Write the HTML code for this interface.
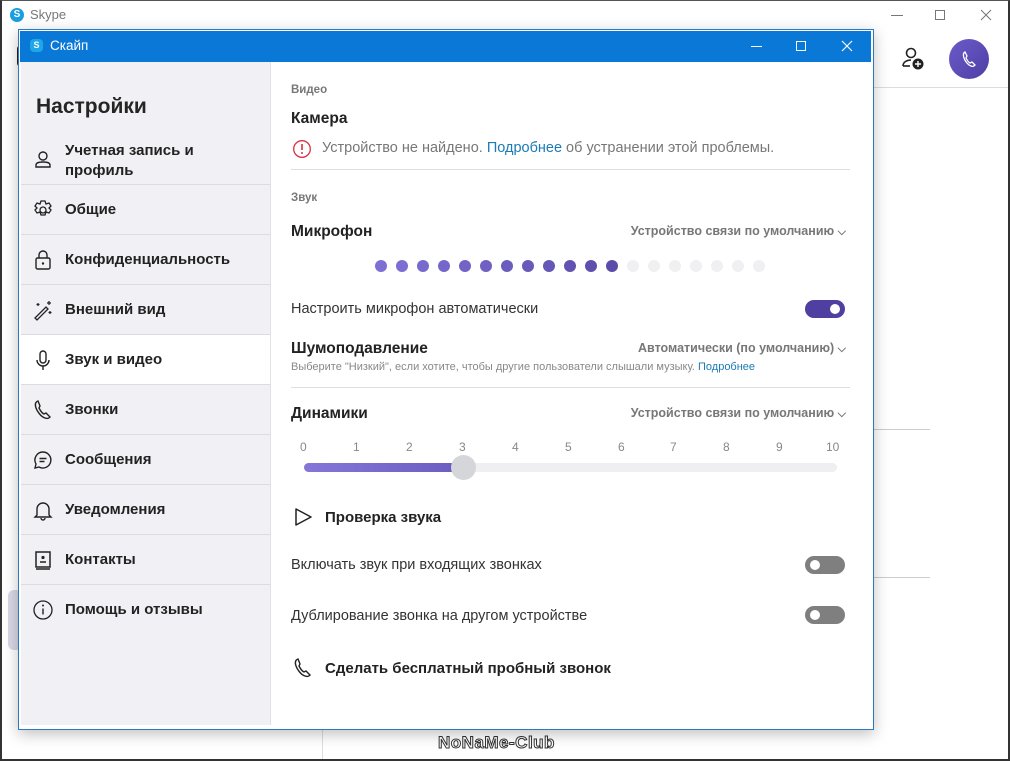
<!DOCTYPE html>
<html><head><meta charset="utf-8"><style>
*{margin:0;padding:0;box-sizing:border-box}
body{width:1010px;height:761px;overflow:hidden;background:#fff;font-family:"Liberation Sans","Noto Sans CJK SC",sans-serif;color:#222;position:relative}
.a{position:absolute}
.outer{left:0;top:0;width:1010px;height:761px;border:2px solid #333;border-top:1px solid #555;background:#fff}
.side{left:21px;top:62px;width:250px;height:663px;background:#f1f1f5;border-right:1px solid #e2e2e6}
.item{position:absolute;left:0;width:249px;height:50px;border-top:1px solid #dcdce0;font-weight:bold;font-size:15px;color:#222}
.item span{position:absolute;left:44px;top:16px}
.item svg{position:absolute;left:11px;top:14px}
.sep{position:absolute;left:291px;width:559px;height:1px;background:#dedede}
.t{font-size:14.5px;color:#333;white-space:nowrap}
.h{font-weight:bold;font-size:15.5px;color:#222;white-space:nowrap}
.dd{font-weight:bold;font-size:12.5px;color:#777;white-space:nowrap}
.dd b{font-size:11px}
.tg{width:40px;height:18px;border-radius:9px}
.tg i{position:absolute;top:4px;width:10px;height:10px;border-radius:5px;background:#fff}
</style></head><body>
<div class="a outer"></div>
<div class="a" style="left:10px;top:8px;width:14px;height:14px;border-radius:7px;background:#1a9ee0;color:#fff;font-size:10px;font-weight:bold;text-align:center;line-height:14px">S</div>
<div class="a" style="left:30px;top:7px;font-size:13px;color:#777">Skype</div>
<div class="a" style="left:891px;top:15px;width:12px;height:1px;background:#777"></div>
<div class="a" style="left:935px;top:10px;width:10px;height:10px;border:1px solid #777"></div>
<svg class="a" style="left:980px;top:9px" width="12" height="12"><path d="M1 1L11 11M11 1L1 11" stroke="#777" stroke-width="1"/></svg>
<svg class="a" style="left:900px;top:46px" width="26" height="26" viewBox="0 0 26 26"><circle cx="11" cy="7" r="4.5" fill="none" stroke="#222" stroke-width="1.6"/><path d="M3 20c0-4 4-6 8-6" fill="none" stroke="#222" stroke-width="1.6"/><path d="M3 20h7" stroke="#222" stroke-width="1.6"/><circle cx="18" cy="18" r="5.5" fill="#222"/><path d="M18 15v6M15 18h6" stroke="#fff" stroke-width="1.4"/></svg>
<div class="a" style="left:949px;top:39px;width:40px;height:40px;border-radius:20px;background:linear-gradient(135deg,#6b5bc9,#4d3fa5)"></div>
<svg class="a" style="left:959px;top:49px" width="20" height="20" viewBox="0 0 20 20"><path d="M6 3c-2 1-2 3-1 6s4 7 7 8c2 1 3 0 4-1l-3-3-2 1c-2-1-3-3-4-5l1-2z" fill="none" stroke="#fff" stroke-width="1.3"/></svg>
<div class="a" style="left:870px;top:87px;width:138px;height:1px;background:#ddd"></div>
<div class="a" style="left:870px;top:429px;width:60px;height:1px;background:#ccc"></div>
<div class="a" style="left:870px;top:577px;width:60px;height:1px;background:#ccc"></div>
<div class="a" style="left:322px;top:726px;width:1px;height:33px;background:#ddd"></div>
<div class="a" style="left:17px;top:45px;width:8px;height:22px;border-radius:4px;background:#222"></div>
<div class="a" style="left:8px;top:590px;width:14px;height:60px;border-radius:6px;background:#d8d8e6"></div>
<div class="a" style="left:438px;top:733px;font-size:17px;color:#fff;-webkit-text-stroke:1px #333;font-weight:bold;letter-spacing:0.5px">NoNaMe-Club</div>

<div class="a" style="left:18px;top:29px;width:856px;height:701px;box-shadow:0 4px 14px rgba(0,0,0,.25);background:#fff;border:1px solid #2b79c2"></div>
<div class="a" style="left:20px;top:31px;width:851px;height:31px;background:#0a78d6"></div>
<div class="a" style="left:30px;top:39px;width:13px;height:13px;border-radius:4px;background:#1ea7e8;color:#fff;font-size:9px;font-weight:bold;text-align:center;line-height:13px">S</div>
<div class="a" style="left:50px;top:38px;font-size:13.5px;color:#fff">Скайп</div>
<div class="a" style="left:751px;top:46px;width:11px;height:1px;background:#fff"></div>
<div class="a" style="left:796px;top:41px;width:10px;height:10px;border:1px solid #fff"></div>
<svg class="a" style="left:841px;top:40px" width="12" height="12"><path d="M1 1L11 11M11 1L1 11" stroke="#fff" stroke-width="1.2"/></svg>

<div class="a side">
<div class="a" style="left:15px;top:33px;font-size:21px;font-weight:bold;color:#252525">Настройки</div>
<div class="item" style="top:72px;height:50px;border-top:none"><svg width="22" height="22" viewBox="0 0 22 22"><circle cx="11" cy="8" r="4" fill="none" stroke="#222" stroke-width="1.4"/><path d="M4 19v-2c0-2 3-3 7-3s7 1 7 3v2z" fill="none" stroke="#222" stroke-width="1.4"/></svg><span style="top:7px;line-height:20px">Учетная запись и<br>профиль</span></div>
<div class="item" style="top:122px"><svg width="22" height="22" viewBox="0 0 22 22"><circle cx="11" cy="11" r="3" fill="none" stroke="#222" stroke-width="1.3"/><path d="M9 2h4l1 3 3-1 2 3-2 2 2 2-2 3-3-1-1 3H9l-1-3-3 1-2-3 2-2-2-2 2-3 3 1z" fill="none" stroke="#222" stroke-width="1.3"/></svg><span>Общие</span></div>
<div class="item" style="top:172px"><svg width="22" height="22" viewBox="0 0 22 22"><rect x="4" y="9" width="14" height="11" rx="1.5" fill="none" stroke="#222" stroke-width="1.4"/><path d="M7 9V6a4 4 0 0 1 8 0v3" fill="none" stroke="#222" stroke-width="1.4"/><circle cx="11" cy="14.5" r="1.2" fill="#222"/></svg><span>Конфиденциальность</span></div>
<div class="item" style="top:222px"><svg width="22" height="22" viewBox="0 0 22 22"><path d="M3 19L14 8l2 2L5 21z" fill="none" stroke="#222" stroke-width="1.3"/><path d="M17 2v4M15 4h4M6 4v3M4.5 5.5h3M18 12v3M16.5 13.5h3" stroke="#222" stroke-width="1.2"/></svg><span>Внешний вид</span></div>
<div class="item" style="top:272px;background:#fff"><svg width="22" height="22" viewBox="0 0 22 22"><rect x="8" y="2" width="6" height="12" rx="3" fill="none" stroke="#222" stroke-width="1.4"/><path d="M5 11a6 6 0 0 0 12 0M11 17v4" fill="none" stroke="#222" stroke-width="1.4"/></svg><span>Звук и видео</span></div>
<div class="item" style="top:322px"><svg width="22" height="22" viewBox="0 0 22 22"><path d="M6 2c-3 1-3 4-2 7s5 9 9 10c3 1 4 0 5-1l-4-4-2 1c-2-1-4-4-5-6l1-2z" fill="none" stroke="#222" stroke-width="1.4"/></svg><span>Звонки</span></div>
<div class="item" style="top:372px"><svg width="22" height="22" viewBox="0 0 22 22"><path d="M11 3a8 8 0 1 1-4 15l-4 1 1-4A8 8 0 0 1 11 3z" fill="none" stroke="#222" stroke-width="1.4"/><path d="M7.5 9.5h7M7.5 12.5h5" stroke="#222" stroke-width="1.4"/></svg><span>Сообщения</span></div>
<div class="item" style="top:422px"><svg width="22" height="22" viewBox="0 0 22 22"><path d="M5 16V10a6 6 0 0 1 12 0v6l2 2H3z" fill="none" stroke="#222" stroke-width="1.4"/><path d="M9 19a2 2 0 0 0 4 0" fill="none" stroke="#222" stroke-width="1.4"/></svg><span>Уведомления</span></div>
<div class="item" style="top:472px"><svg width="22" height="22" viewBox="0 0 22 22"><rect x="4" y="3" width="14" height="15" fill="none" stroke="#222" stroke-width="1.5"/><path d="M4 20h14" stroke="#222" stroke-width="1.5"/><circle cx="11" cy="8.5" r="1.6" fill="#222"/><path d="M8 13h6" stroke="#222" stroke-width="1.5"/></svg><span>Контакты</span></div>
<div class="item" style="top:522px"><svg width="22" height="22" viewBox="0 0 22 22"><circle cx="11" cy="11" r="9" fill="none" stroke="#222" stroke-width="1.3"/><path d="M11 9.5v6" stroke="#222" stroke-width="1.4"/><circle cx="11" cy="6.5" r="1" fill="#222"/></svg><span>Помощь и отзывы</span></div>
</div>

<div class="a" style="left:291px;top:84px;font-size:11.5px;font-weight:bold;color:#777">Видео</div>
<div class="a h" style="left:291px;top:110px">Камера</div>
<svg class="a" style="left:292px;top:139px" width="20" height="20" viewBox="0 0 20 20"><circle cx="10" cy="10" r="8.3" fill="none" stroke="#d9333f" stroke-width="1.3"/><path d="M10 5v6" stroke="#d9333f" stroke-width="1.6"/><circle cx="10" cy="14" r="1" fill="#d9333f"/></svg>
<div class="a t" style="left:322px;top:140px;color:#777">Устройство не найдено. <span style="color:#1b7bb5">Подробнее</span> об устранении этой проблемы.</div>
<div class="sep" style="top:169px"></div>
<div class="a" style="left:291px;top:192px;font-size:11.5px;font-weight:bold;color:#777">Звук</div>
<div class="a h" style="left:291px;top:223px">Микрофон</div>
<div class="a dd" style="right:164px;top:224px">Устройство связи по умолчанию <b>⌵</b></div>
<svg class="a" style="left:370px;top:255px" width="400" height="22">
<circle cx="11" cy="11" r="6" fill="#7d6fd4"/><circle cx="32" cy="11" r="6" fill="#7b6dd1"/><circle cx="53" cy="11" r="6" fill="#786acd"/><circle cx="74" cy="11" r="6" fill="#7567ca"/><circle cx="95" cy="11" r="6" fill="#7264c6"/><circle cx="116" cy="11" r="6" fill="#6f60c2"/><circle cx="137" cy="11" r="6" fill="#6b5dbe"/><circle cx="158" cy="11" r="6" fill="#685aba"/><circle cx="179" cy="11" r="6" fill="#6557b6"/><circle cx="200" cy="11" r="6" fill="#6253b2"/><circle cx="221" cy="11" r="6" fill="#5f50ae"/><circle cx="242" cy="11" r="6" fill="#5b4caa"/>
<g fill="#f0f0f2"><circle cx="263" cy="11" r="6"/><circle cx="284" cy="11" r="6"/><circle cx="305" cy="11" r="6"/><circle cx="326" cy="11" r="6"/><circle cx="347" cy="11" r="6"/><circle cx="368" cy="11" r="6"/><circle cx="389" cy="11" r="6"/></g>
</svg>
<div class="a t" style="left:291px;top:301px">Настроить микрофон автоматически</div>
<div class="a tg" style="left:805px;top:300px;background:#4f3fa0"><i style="left:25px"></i></div>
<div class="a h" style="left:291px;top:340px">Шумоподавление</div>
<div class="a dd" style="right:164px;top:341px">Автоматически (по умолчанию) <b>⌵</b></div>
<div class="a" style="left:291px;top:361px;font-size:11px;color:#888;white-space:nowrap">Выберите "Низкий", если хотите, чтобы другие пользователи слышали музыку. <span style="color:#1b7bb5">Подробнее</span></div>
<div class="sep" style="top:387px"></div>
<div class="a h" style="left:291px;top:405px">Динамики</div>
<div class="a dd" style="right:164px;top:406px">Устройство связи по умолчанию <b>⌵</b></div>
<div class="a" style="left:300px;top:440px;width:545px;height:16px;font-size:12px;color:#888">
<span class="a" style="left:0">0</span><span class="a" style="left:53px">1</span><span class="a" style="left:106px">2</span><span class="a" style="left:159px">3</span><span class="a" style="left:212px">4</span><span class="a" style="left:265px">5</span><span class="a" style="left:318px">6</span><span class="a" style="left:370px">7</span><span class="a" style="left:423px">8</span><span class="a" style="left:476px">9</span><span class="a" style="left:526px">10</span></div>
<div class="a" style="left:304px;top:463px;width:533px;height:9px;border-radius:5px;background:#efeff1"></div>
<div class="a" style="left:304px;top:463px;width:160px;height:9px;border-radius:5px;background:linear-gradient(90deg,#8576d8,#6a5cc0)"></div>
<div class="a" style="left:451px;top:455px;width:25px;height:25px;border-radius:13px;background:#d4d6da"></div>
<svg class="a" style="left:294px;top:507px" width="20" height="20"><path d="M2 2L17 10L2 18Z" fill="none" stroke="#222" stroke-width="1.5" stroke-linejoin="round"/></svg>
<div class="a h" style="left:325px;top:509px;font-size:15px">Проверка звука</div>
<div class="a t" style="left:291px;top:557px">Включать звук при входящих звонках</div>
<div class="a tg" style="left:805px;top:556px;background:#7f7f7f"><i style="left:5px"></i></div>
<div class="a t" style="left:291px;top:608px">Дублирование звонка на другом устройстве</div>
<div class="a tg" style="left:805px;top:606px;background:#7f7f7f"><i style="left:5px"></i></div>
<svg class="a" style="left:292px;top:657px" width="22" height="22" viewBox="0 0 22 22"><path d="M6 2c-3 1-3 4-2 7s5 9 9 10c3 1 4 0 5-1l-4-4-2 1c-2-1-4-4-5-6l1-2z" fill="none" stroke="#222" stroke-width="1.4"/></svg>
<div class="a h" style="left:325px;top:660px;font-size:15px">Сделать бесплатный пробный звонок</div>
</body></html>
